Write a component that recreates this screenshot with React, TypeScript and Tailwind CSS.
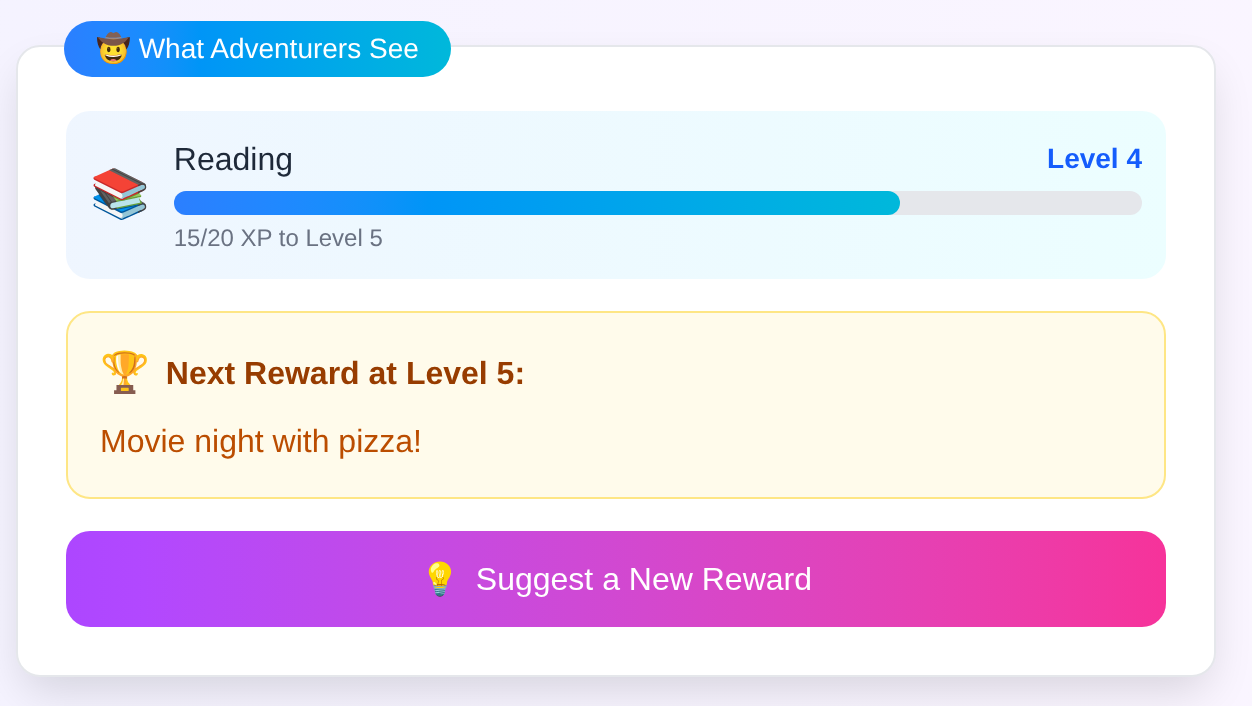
export default function App() {
  return (
    <div className="min-h-screen bg-gradient-to-r from-violet-50 to-purple-50 pt-[45px] pl-4 font-['Liberation_Sans','Noto_Color_Emoji',sans-serif] [text-rendering:geometricPrecision]">
      <div className="relative w-[1200px] transform-gpu rounded-3xl border-2 border-gray-200 bg-white px-12 pt-16 pb-12 shadow-[0_20px_45px_-8px_rgba(0,0,0,0.14)]">
        <div className="absolute -top-[26px] left-[46px] flex h-14 items-center rounded-full bg-gradient-to-r from-blue-500 to-cyan-500 px-8 text-[28px] text-white">
          🤠 What Adventurers See
        </div>

        <div className="flex flex-col gap-8">
          <div className="flex items-center gap-6 rounded-3xl bg-gradient-to-r from-blue-50 to-cyan-50 p-6">
            <div className="text-5xl">📚</div>
            <div className="flex-1">
              <div className="mb-2 flex items-center justify-between">
                <span className="text-[32px] text-gray-800">Reading</span>
                <span className="text-[28px] font-bold text-blue-600">Level 4</span>
              </div>
              <div className="h-6 w-full rounded-full bg-gray-200">
                <div className="h-6 w-3/4 rounded-full bg-gradient-to-r from-blue-500 to-cyan-500"></div>
              </div>
              <p className="mt-2 text-2xl text-gray-500">15/20 XP to Level 5</p>
            </div>
          </div>

          <div className="rounded-3xl border-2 border-amber-200 bg-amber-50 p-8">
            <div className="mb-4 flex h-14 items-center gap-4">
              <span className="text-[40px]">🏆</span>
              <span className="text-[32px] font-bold text-amber-800">Next Reward at Level 5:</span>
            </div>
            <p className="text-[32px] leading-12 text-amber-700">Movie night with pizza!</p>
          </div>

          <button className="flex h-24 items-center justify-center gap-4 rounded-3xl bg-gradient-to-r from-purple-500 to-pink-500 text-[32px] text-white">
            <span>💡</span>
            <span>Suggest a New Reward</span>
          </button>
        </div>
      </div>
    </div>
  );
}
